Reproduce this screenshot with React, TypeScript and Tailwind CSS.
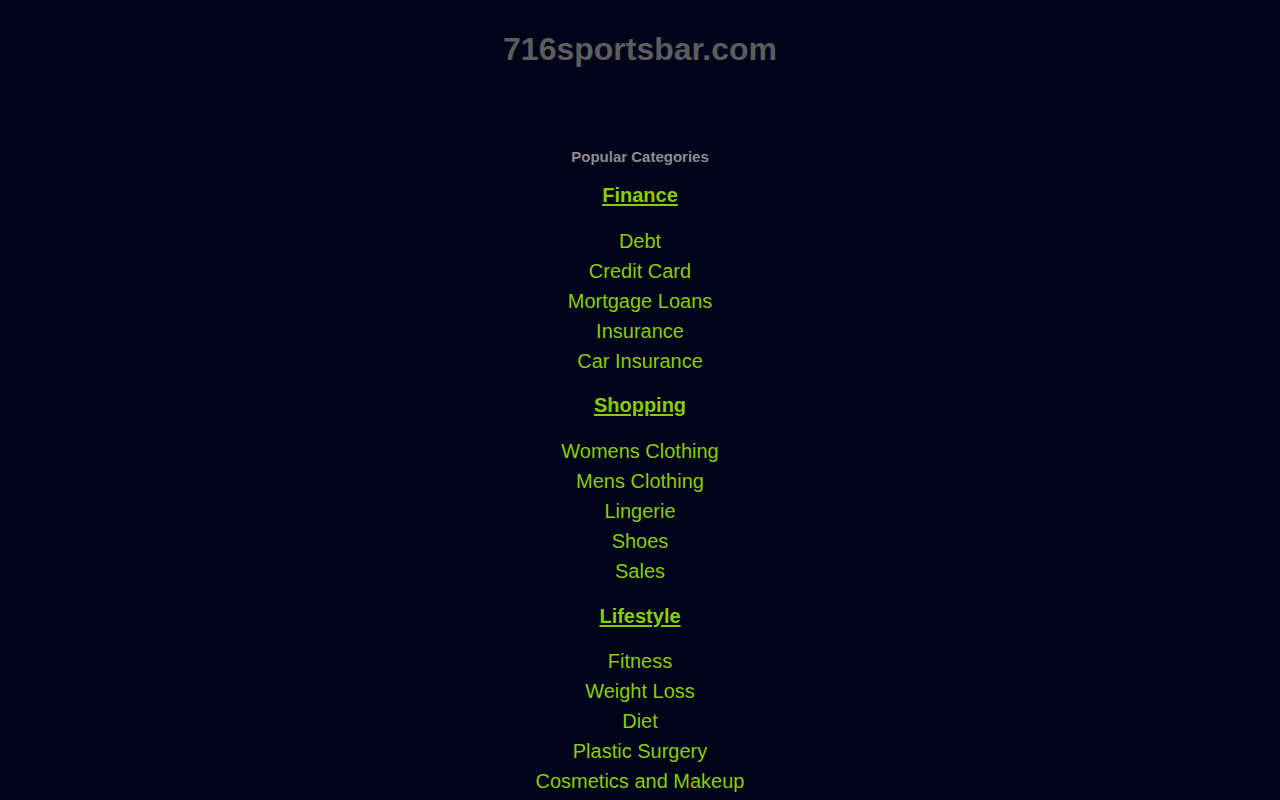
const categories = [
  {
    title: 'Finance',
    items: ['Debt', 'Credit Card', 'Mortgage Loans', 'Insurance', 'Car Insurance'],
    gap: 'mt-[18px] mb-[19px]',
  },
  {
    title: 'Shopping',
    items: ['Womens Clothing', 'Mens Clothing', 'Lingerie', 'Shoes', 'Sales'],
    gap: 'mt-[17px] mb-[19px]',
  },
  {
    title: 'Lifestyle',
    items: ['Fitness', 'Weight Loss', 'Diet', 'Plastic Surgery', 'Cosmetics and Makeup'],
    gap: 'mt-[18px] mb-[18px]',
  },
];

export default function App() {
  return (
    <div className="min-h-screen bg-[#00041a] text-center font-['Liberation_Sans',Arial,sans-serif]">
      <header className="pt-[31px]">
        <h1 className="text-[32px] leading-[37px] font-bold text-[#5c5c5c]">716sportsbar.com</h1>
      </header>

      <main className="pt-[81px] pb-10">
        <p className="text-[15px] leading-[16px] font-bold text-[#8c8c8c]">Popular Categories</p>

        {categories.map((cat) => (
          <section key={cat.title}>
            <h2 className={`${cat.gap} text-[20px] leading-[24px] font-bold`}>
              <a href="#" className="text-[#88cc00] underline underline-offset-2">
                {cat.title}
              </a>
            </h2>
            <ul>
              {cat.items.map((item) => (
                <li key={item} className="text-[20px] leading-[30px]">
                  <a href="#" className="text-[#88cc00]">
                    {item}
                  </a>
                </li>
              ))}
            </ul>
          </section>
        ))}
      </main>
    </div>
  );
}
